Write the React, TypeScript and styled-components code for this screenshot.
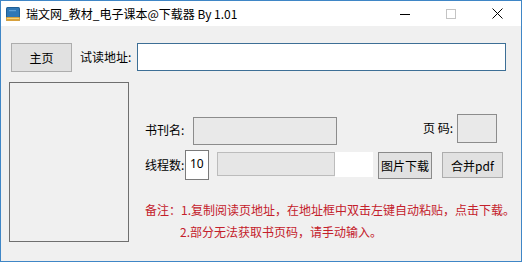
import React from "react";
import styled, { createGlobalStyle } from "styled-components";

const Global = createGlobalStyle`
  html, body { margin: 0; padding: 0; background: #f0f0f0; }
  * { box-sizing: border-box; }
  body { font-family: "Noto Sans CJK SC", "Noto Sans", sans-serif; font-size: 12px; color: #000; }
`;

const Window = styled.div`
  width: 522px;
  height: 262px;
  border: 1px solid #3f86c6;
  background: #f0f0f0;
  display: flex;
  flex-direction: column;
  overflow: hidden;
`;

const TitleBar = styled.div`
  height: 25px;
  flex: none;
  background: #ffffff;
  display: flex;
  align-items: center;
`;

const AppIcon = styled.svg`
  width: 16px;
  height: 16px;
  margin-left: 4px;
  flex: none;
`;

const Title = styled.span`
  margin-left: 5px;
  font-size: 12px;
  line-height: 16px;
  color: #000;
  white-space: nowrap;
`;

const Caption = styled.div`
  margin-left: auto;
  padding-right: 1px;
  display: flex;
  height: 100%;
`;

const CaptionButton = styled.div`
  width: 46px;
  height: 25px;
  display: flex;
  align-items: center;
  justify-content: center;
`;

const Client = styled.div`
  flex: 1;
  display: flex;
  flex-direction: column;
  padding: 17px 15px 0 8px;
`;

const TopRow = styled.div`
  display: flex;
  align-items: flex-start;
  padding-left: 2px;
`;

const PushButton = styled.button<{ $w: number; $h: number; $dark?: boolean }>`
  width: ${(p) => p.$w}px;
  height: ${(p) => p.$h}px;
  flex: none;
  padding: 0;
  background: #e1e1e1;
  border: 1px solid ${(p) => (p.$dark ? "#8a8a8a" : "#adadad")};
  font-family: "Noto Sans CJK SC", "Noto Sans", sans-serif;
  font-size: 12px;
  color: #000;
  display: flex;
  align-items: center;
  justify-content: center;
  white-space: nowrap;
`;

const Label = styled.span<{ $w?: number; $mt?: number; $ml?: number }>`
  ${(p) => (p.$w ? `width: ${p.$w}px;` : "")}
  margin-top: ${(p) => p.$mt ?? 0}px;
  margin-left: ${(p) => p.$ml ?? 0}px;
  flex: none;
  font-size: 12px;
  line-height: 16px;
  white-space: nowrap;
`;

const AddressInput = styled.input`
  flex: 1;
  min-width: 0;
  height: 28px;
  border: 1px solid #3d6f96;
  background: #ffffff;
  outline: none;
  padding: 0 3px;
  font-family: "Noto Sans CJK SC", "Noto Sans", sans-serif;
  font-size: 12px;
`;

const MainRow = styled.div`
  display: flex;
  margin-top: 10px;
`;

const Cover = styled.div`
  width: 120px;
  height: 160px;
  flex: none;
  border: 1px solid #6f6f6f;
  background: #f0f0f0;
`;

const Panel = styled.div`
  flex: 1;
  min-width: 0;
  margin-left: 16px;
  padding-top: 32px;
  display: flex;
  flex-direction: column;
`;

const FieldRow = styled.div<{ $mt?: number; $pr?: number }>`
  display: flex;
  align-items: flex-start;
  height: 30px;
  margin-top: ${(p) => p.$mt ?? 0}px;
  padding-right: ${(p) => p.$pr ?? 0}px;
`;

const ReadonlyBox = styled.input<{ $w: number; $h: number; $mt?: number; $ml?: number }>`
  width: ${(p) => p.$w}px;
  height: ${(p) => p.$h}px;
  margin-top: ${(p) => p.$mt ?? 0}px;
  margin-left: ${(p) => p.$ml ?? 0}px;
  flex: none;
  border: 1px solid #8c8c8c;
  background: #e9e9e9;
  outline: none;
  padding: 0 3px;
  font-family: "Noto Sans CJK SC", "Noto Sans", sans-serif;
  font-size: 12px;
`;

const Spacer = styled.div`
  flex: 1;
`;

const ThreadInput = styled.input`
  width: 24px;
  height: 30px;
  flex: none;
  border: 1px solid #7a7a7a;
  background: #ffffff;
  outline: none;
  padding: 0 0 3px 4px;
  font-family: "Noto Sans", "Noto Sans CJK SC", sans-serif;
  font-size: 12px;
  color: #000;
`;

const Progress = styled.div`
  width: 118px;
  height: 24px;
  margin: 2px 0 0 8px;
  flex: none;
  border: 1px solid #bcbcbc;
  background: #e6e6e6;
`;

const BlankCell = styled.div`
  width: 38px;
  height: 25px;
  margin-top: 2px;
  flex: none;
  background: #ffffff;
`;

const ButtonSlot = styled.div<{ $ml: number }>`
  margin: 2px 0 0 ${(p) => p.$ml}px;
  flex: none;
`;

const Notes = styled.div`
  margin-top: 19px;
  color: #c4202b;
  font-size: 12px;
  line-height: 22px;
  white-space: nowrap;
`;

const NoteLine = styled.div<{ $indent?: number }>`
  padding-left: ${(p) => p.$indent ?? 0}px;
`;

export default function App() {
  return (
    <>
      <Global />
      <Window>
        <TitleBar>
          <AppIcon viewBox="0 0 16 16">
            <rect x="1" y="1" width="14" height="14" rx="1.5" fill="#1f5f96" />
            <rect x="2" y="2" width="12" height="9" rx="1" fill="#2f77b5" />
            <rect x="4" y="4" width="7" height="1.2" fill="#5fa0d6" />
            <rect x="1" y="11" width="14" height="4" rx="1" fill="#d8a13c" />
            <rect x="2" y="12" width="12" height="1" fill="#f3d37a" />
          </AppIcon>
          <Title>瑞文网_教材_电子课本@下载器 By 1.01</Title>
          <Caption>
            <CaptionButton>
              <svg width="10" height="10" viewBox="0 0 10 10">
                <line x1="0" y1="5.5" x2="10" y2="5.5" stroke="#000" strokeWidth="1" />
              </svg>
            </CaptionButton>
            <CaptionButton>
              <svg width="10" height="10" viewBox="0 0 10 10">
                <rect x="0.5" y="0.5" width="9" height="9" fill="none" stroke="#c4c4c4" strokeWidth="1" />
              </svg>
            </CaptionButton>
            <CaptionButton>
              <svg width="11" height="11" viewBox="0 0 11 11">
                <line x1="0.5" y1="0.5" x2="10.5" y2="10.5" stroke="#000" strokeWidth="1" />
                <line x1="10.5" y1="0.5" x2="0.5" y2="10.5" stroke="#000" strokeWidth="1" />
              </svg>
            </CaptionButton>
          </Caption>
        </TitleBar>
        <Client>
          <TopRow>
            <PushButton $w={61} $h={29}>主页</PushButton>
            <Label $w={57} $ml={8} $mt={6}>试读地址:</Label>
            <AddressInput defaultValue="" />
          </TopRow>
          <MainRow>
            <Cover />
            <Panel>
              <FieldRow $pr={9}>
                <Label $w={48} $mt={8}>书刊名:</Label>
                <ReadonlyBox $w={144} $h={28} $mt={3} readOnly defaultValue="" />
                <Spacer />
                <Label $mt={6}>页 码:</Label>
                <ReadonlyBox $w={40} $h={29} $ml={4} readOnly defaultValue="" />
              </FieldRow>
              <FieldRow $mt={6}>
                <Label $w={40} $mt={7}>线程数:</Label>
                <ThreadInput defaultValue="10" />
                <Progress />
                <BlankCell />
                <ButtonSlot $ml={5}>
                  <PushButton $w={54} $h={27} $dark>图片下载</PushButton>
                </ButtonSlot>
                <ButtonSlot $ml={10}>
                  <PushButton $w={61} $h={26}>合并pdf</PushButton>
                </ButtonSlot>
              </FieldRow>
              <Notes>
                <NoteLine>备注：1.复制阅读页地址，在地址框中双击左键自动粘贴，点击下载。</NoteLine>
                <NoteLine $indent={35}>2.部分无法获取书页码，请手动输入。</NoteLine>
              </Notes>
            </Panel>
          </MainRow>
        </Client>
      </Window>
    </>
  );
}
